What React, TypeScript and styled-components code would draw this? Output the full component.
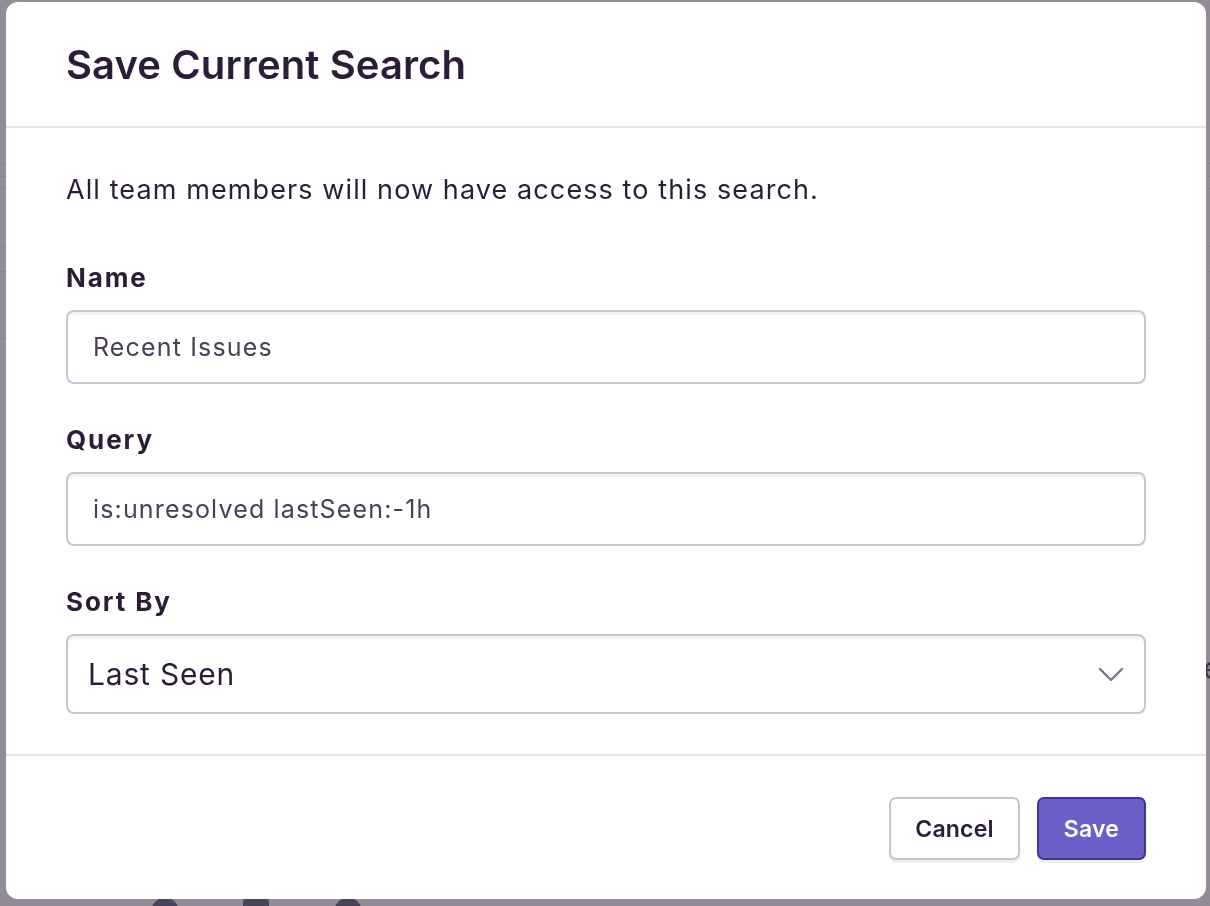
import React from 'react';
import styled, { createGlobalStyle } from 'styled-components';

const GlobalStyle = createGlobalStyle`
  html, body {
    margin: 0;
    padding: 0;
    width: 1210px;
    height: 906px;
    overflow: hidden;
    background: #928c99;
    font-family: Inter, "Noto Sans", sans-serif;
    color: #2b1d38;
  }
`;

const Backdrop = styled.div`
  position: fixed;
  inset: 0;
  background: #928c99;
`;

const BackdropLine = styled.div<{ top: number }>`
  position: absolute;
  left: 0;
  right: 0;
  top: ${({ top }) => top}px;
  height: 1px;
  background: #85808c;
`;

const BackdropDot = styled.div<{ left: number; square?: boolean }>`
  position: absolute;
  bottom: -14px;
  left: ${({ left }) => left}px;
  width: 26px;
  height: 22px;
  border-radius: ${({ square }) => (square ? '3px' : '50%')};
  background: #4a4459;
`;

const StrayLetter = styled.span`
  position: absolute;
  left: 1203px;
  top: 650px;
  font-size: 30px;
  color: #3c3347;
`;

const Modal = styled.div`
  position: fixed;
  top: 2px;
  left: 6px;
  width: 1200px;
  height: 897px;
  background: #fff;
  border-radius: 12px;
  display: flex;
  flex-direction: column;
  overflow: hidden;
`;

const Header = styled.header`
  height: 124px;
  padding: 0 60px;
  display: flex;
  align-items: center;
  border-bottom: 2px solid #e5e1e9;
`;

const Title = styled.h2`
  margin: 0;
  font-size: 40px;
  font-weight: 600;
  letter-spacing: 0.1px;
`;

const Body = styled.div`
  padding: 44px 60px 40px;
  border-bottom: 2px solid #e5e1e9;
`;

const Intro = styled.p`
  margin: 0 0 52px;
  font-size: 27px;
  line-height: 36px;
  letter-spacing: 1.1px;
`;

const Field = styled.div`
  & + & {
    margin-top: 38px;
  }
`;

const Label = styled.label`
  display: block;
  font-size: 26px;
  font-weight: 700;
  line-height: 36px;
  letter-spacing: 1.9px;
  margin-bottom: 14px;
`;

const Input = styled.div<{ tall?: boolean }>`
  box-sizing: border-box;
  height: ${({ tall }) => (tall ? 80 : 74)}px;
  border: 2px solid #cbc3d3;
  border-radius: 8px;
  box-shadow: inset 0 3px 0 rgba(0, 0, 0, 0.045);
  display: flex;
  align-items: center;
  padding: 0 ${({ tall }) => (tall ? 20 : 25)}px;
`;

const InputText = styled.span`
  font-size: 25px;
  letter-spacing: 1.15px;
  color: #4a3f56;
`;

const SelectText = styled.span`
  flex: 1;
  font-size: 30px;
  letter-spacing: 0.8px;
  color: #2b1d38;
`;

const Footer = styled.footer`
  padding: 41px 60px 0;
  display: flex;
  justify-content: flex-end;
  gap: 17px;
`;

const Button = styled.button<{ primary?: boolean }>`
  height: 63px;
  padding: 0 ${({ primary }) => (primary ? 25 : 24)}px;
  border-radius: 7px;
  font-family: inherit;
  font-size: 23px;
  font-weight: 600;
  letter-spacing: 0.2px;
  border: 2px solid ${({ primary }) => (primary ? '#3e3496' : '#cbc3d3')};
  background: ${({ primary }) => (primary ? '#6c5fc7' : '#fff')};
  color: ${({ primary }) => (primary ? '#fff' : '#2b1d38')};
  box-shadow: 0 3px 0 rgba(0, 0, 0, 0.06);
  cursor: pointer;
`;

function Chevron() {
  return (
    <svg width="26" height="16" viewBox="0 0 26 16" fill="none">
      <path d="M2 3l11 11L24 3" stroke="#80708f" strokeWidth="2.4" strokeLinecap="round" strokeLinejoin="round" />
    </svg>
  );
}

export default function App() {
  return (
    <>
      <GlobalStyle />
      <Backdrop>
        {[163, 176, 188, 246, 271, 338].map((t) => (
          <BackdropLine key={t} top={t} />
        ))}
        <BackdropDot left={152} />
        <BackdropDot left={243} square />
        <BackdropDot left={335} />
        <StrayLetter>e</StrayLetter>
      </Backdrop>
      <Modal>
        <Header>
          <Title>Save Current Search</Title>
        </Header>
        <Body>
          <Intro>All team members will now have access to this search.</Intro>
          <Field>
            <Label>Name</Label>
            <Input>
              <InputText>Recent Issues</InputText>
            </Input>
          </Field>
          <Field>
            <Label>Query</Label>
            <Input>
              <InputText>is:unresolved lastSeen:-1h</InputText>
            </Input>
          </Field>
          <Field>
            <Label>Sort By</Label>
            <Input tall>
              <SelectText>Last Seen</SelectText>
              <Chevron />
            </Input>
          </Field>
        </Body>
        <Footer>
          <Button>Cancel</Button>
          <Button primary>Save</Button>
        </Footer>
      </Modal>
    </>
  );
}
